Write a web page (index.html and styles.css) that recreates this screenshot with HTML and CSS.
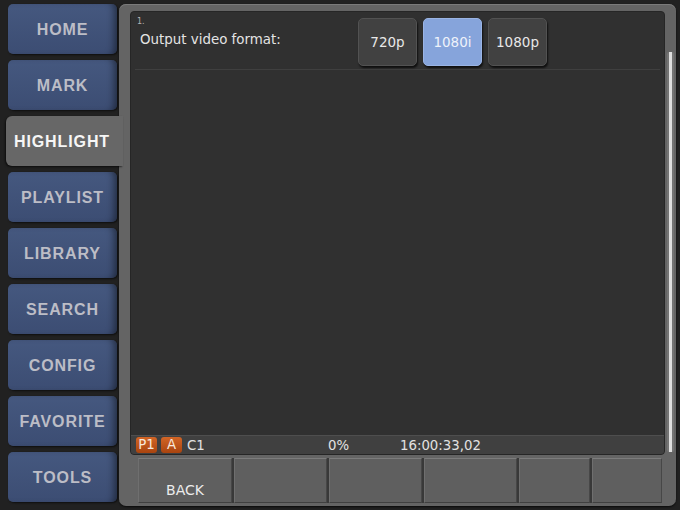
FILE: index.html
```html
<!DOCTYPE html>
<html>
<head>
<meta charset="utf-8">
<link rel="stylesheet" href="styles.css">
</head>
<body>
<div class="app">
  <nav class="nav">
    <div class="navbtn">HOME</div>
    <div class="navbtn">MARK</div>
    <div class="navbtn active">HIGHLIGHT</div>
    <div class="navbtn">PLAYLIST</div>
    <div class="navbtn">LIBRARY</div>
    <div class="navbtn">SEARCH</div>
    <div class="navbtn">CONFIG</div>
    <div class="navbtn">FAVORITE</div>
    <div class="navbtn">TOOLS</div>
  </nav>
  <section class="panel">
    <div class="upper">
      <div class="content">
        <div class="header">
          <div class="labels">
            <div class="index">1.</div>
            <div class="label">Output video format:</div>
          </div>
          <div class="choices">
            <div class="choice">720p</div>
            <div class="choice selected">1080i</div>
            <div class="choice">1080p</div>
          </div>
        </div>
        <div class="body"></div>
        <div class="status">
          <div class="grp">
            <span class="badge">P1</span>
            <span class="badge">A</span>
            <span class="cam">C1</span>
          </div>
          <div class="pct">0%</div>
          <div class="tc">16:00:33,02</div>
        </div>
      </div>
      <div class="scroll"><div class="thumb"></div></div>
    </div>
    <div class="softkeys">
      <div class="key w94">BACK</div>
      <div class="key w93"></div>
      <div class="key w93"></div>
      <div class="key w93"></div>
      <div class="key w71"></div>
      <div class="key w70"></div>
    </div>
  </section>
</div>
</body>
</html>
```

FILE: styles.css
```css
html, body {
  margin: 0;
  padding: 0;
  background: #212121;
  width: 680px;
  height: 510px;
  overflow: hidden;
}
.app {
  display: flex;
  width: 680px;
  height: 510px;
}
.nav {
  width: 119px;
  flex: none;
  display: flex;
  flex-direction: column;
  gap: 6px;
  padding-top: 4px;
}
.navbtn {
  height: 50px;
  width: 109px;
  margin-left: 8px;
  padding-top: 1px;
  box-sizing: border-box;
  border-radius: 5px;
  background: linear-gradient(#45587f, #3c4d73);
  box-shadow: inset -7px 0 7px -4px rgba(0,0,0,0.45), 1px 1px 2px rgba(0,0,0,0.6);
  display: flex;
  align-items: center;
  justify-content: center;
  font-family: "Liberation Sans", Arial, sans-serif;
  font-weight: bold;
  font-size: 16px;
  letter-spacing: 0.9px;
  color: #bcbdc6;
}
.navbtn.active {
  width: 117px;
  margin-left: 6px;
  margin-right: -4px;
  padding-right: 5px;
  border-radius: 6px 0 0 6px;
  background: #676767;
  box-shadow: -1px 1px 2px rgba(0,0,0,0.6);
  color: #f6f6f6;
  position: relative;
  z-index: 1;
}
.panel {
  width: 557px;
  height: 502px;
  margin-top: 4px;
  box-sizing: border-box;
  padding: 7px 2px 3px 11px;
  background: #646464;
  border-radius: 7px;
  box-shadow: inset 0 1px 0 #7a7a7a, 0 1px 2px rgba(0,0,0,0.7);
  display: flex;
  flex-direction: column;
  gap: 3px;
}
.upper {
  display: flex;
  height: 444px;
}
.content {
  width: 535px;
  height: 444px;
  box-sizing: border-box;
  background: #303030;
  border: 1px solid #262626;
  border-radius: 4px;
  display: flex;
  flex-direction: column;
  font-family: "DejaVu Sans", Verdana, sans-serif;
  color: #e4e4e4;
  overflow: hidden;
}
.header {
  display: flex;
  margin: 0 4px;
  padding: 6px 0 3px 5px;
  border-bottom: 1px solid #3f3f3f;
}
.labels {
  width: 218px;
  display: flex;
  flex-direction: column;
}
.index {
  font-size: 8px;
  line-height: 10px;
  margin-top: -1px;
  margin-left: -3px;
  color: #b4b4b4;
}
.label {
  font-size: 13.4px;
  line-height: 16px;
  margin-top: 5px;
}
.choices {
  display: flex;
  gap: 6px;
}
.choice {
  width: 59px;
  height: 48px;
  box-sizing: border-box;
  border: 1px solid #525252;
  border-radius: 5px;
  background: #414141;
  box-shadow: 1px 2px 2px rgba(0,0,0,0.7);
  display: flex;
  align-items: center;
  justify-content: center;
  font-size: 13.5px;
  color: #e8e8e8;
}
.choice.selected {
  background: #86a4db;
  border-color: #9ab4e4;
  color: #eef2fa;
}
.body {
  flex: 1;
}
.status {
  height: 19px;
  box-sizing: border-box;
  background: #404040;
  border-top: 1px solid #4e4e4e;
  display: flex;
  align-items: center;
  padding-left: 5px;
  font-size: 13.3px;
  color: #e2e2e2;
}
.grp {
  width: 192px;
  display: flex;
  align-items: center;
  gap: 4px;
}
.badge {
  width: 21px;
  height: 16px;
  border-radius: 3px;
  background: linear-gradient(#d36526, #a9440f);
  color: #f7e8dc;
  display: flex;
  align-items: center;
  justify-content: center;
  font-size: 13.3px;
  line-height: 16px;
}
.cam {
  margin-left: 1px;
}
.pct {
  width: 72px;
}
.scroll {
  width: 7px;
  height: 400px;
  margin-left: 2px;
  margin-top: 41px;
  background: #747474;
  border-radius: 2px;
  display: flex;
  justify-content: center;
}
.thumb {
  width: 3px;
  height: 100%;
  background: #dedede;
}
.softkeys {
  height: 45px;
  margin-left: 8px;
  width: 524px;
  display: flex;
  gap: 2px;
  background: #393939;
}
.key {
  height: 45px;
  box-sizing: border-box;
  background: #5f5f5f;
  border-top: 1px solid #7c7c7c;
  border-left: 1px solid #6f6f6f;
  border-right: 1px solid #474747;
  border-bottom: 1px solid #404040;
  display: flex;
  align-items: flex-end;
  justify-content: center;
  padding-bottom: 4px;
  font-family: "DejaVu Sans", Verdana, sans-serif;
  font-size: 14px;
  color: #ececec;
}
.w94 { width: 94px; }
.w93 { width: 93px; }
.w71 { width: 71px; }
.w70 { width: 70px; }
```
